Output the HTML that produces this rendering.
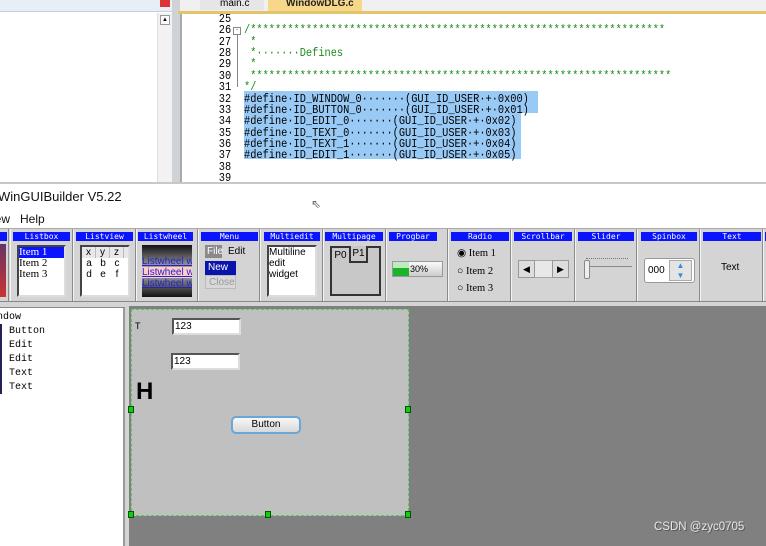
<!DOCTYPE html>
<html><head><meta charset="utf-8"><style>
*{margin:0;padding:0;box-sizing:border-box}
body{width:766px;height:546px;overflow:hidden;background:#fff;position:relative;font-family:"Liberation Sans",sans-serif}
.a{position:absolute}
.code{font-family:"Liberation Mono",monospace;font-size:12px;line-height:11.36px;white-space:pre;color:#000}
.sx{transform:scaleX(0.86);transform-origin:0 0}
.g{color:#1a8a1a}
.hd{position:absolute;top:3px;height:9px;background:#0a14ff;color:#fff;font-family:"DejaVu Sans Mono",monospace;font-size:8px;line-height:9px;text-align:center}
.cell{position:absolute;top:229px;height:72px;border-left:1px solid #f4f4f4;border-right:1px solid #8a8a8a;background:#d4d4d4}
.sm{font-size:10px;font-family:"Liberation Sans",sans-serif}
</style></head><body>
<div class="a" style="left:0;top:0;width:766px;height:12px;background:#f0f0f0"></div>
<div class="a" style="left:0;top:0;width:172px;height:12px;background:#e8eef6;border-bottom:1px solid #ccd"></div>
<div class="a" style="left:160px;top:0;width:10px;height:7px;background:#d33"></div>
<div class="a" style="left:0;top:13px;width:172px;height:170px;background:#fff"></div>
<div class="a" style="left:157px;top:13px;width:15px;height:170px;background:#f2f2f2;border-left:1px solid #ddd"></div>
<div class="a" style="left:160px;top:15px;width:10px;height:10px;border:1px solid #999;background:#fafafa;font-size:6px;text-align:center;line-height:8px">▲</div>
<div class="a" style="left:172px;top:0;width:8px;height:183px;background:#cfd3d8"></div>
<div class="a" style="left:200px;top:0;width:64px;height:10px;background:#e6e6e6;font-size:10px;line-height:8px;padding-left:20px">main.c</div>
<div class="a" style="left:268px;top:0;width:94px;height:11px;background:#f7d88a;font-size:10px;font-weight:bold;line-height:8px;padding-left:18px;color:#222">WindowDLG.c</div>
<div class="a" style="left:178px;top:11px;width:588px;height:3px;background:#e2c46a"></div>
<div class="a" style="left:180px;top:14px;width:586px;height:169px;background:#fff;border-left:2px solid #a9a9a9"></div>
<div class="a" style="left:244px;top:91px;width:294px;height:22px;background:#99c9f5"></div>
<div class="a" style="left:244px;top:113px;width:277px;height:46px;background:#99c9f5"></div>
<div class="a code sx" style="left:214px;top:14px;width:20px;text-align:right">25
26
27
28
29
30
31
32
33
34
35
36
37
38
39</div>
<div class="a" style="left:233px;top:27px;width:8px;height:8px;border:1px solid #888;font-size:7px;line-height:6px;text-align:center;color:#555">-</div>
<div class="a" style="left:237px;top:35px;width:1px;height:52px;background:#888"></div>
<div class="a code sx" style="left:244px;top:14px">
<span class="g">/*******************************************************************
 *
 *·······Defines
 *
 ********************************************************************
*/</span>
#define·ID_WINDOW_0·······(GUI_ID_USER·+·0x00)
#define·ID_BUTTON_0·······(GUI_ID_USER·+·0x01)
#define·ID_EDIT_0·······(GUI_ID_USER·+·0x02)
#define·ID_TEXT_0·······(GUI_ID_USER·+·0x03)
#define·ID_TEXT_1·······(GUI_ID_USER·+·0x04)
#define·ID_EDIT_1·······(GUI_ID_USER·+·0x05)</div>
<div class="a" style="left:0;top:182px;width:766px;height:2px;background:#c8c8c8"></div>
<div class="a" style="left:-2px;top:189px;font-size:13px;color:#111">WinGUIBuilder V5.22</div>
<div class="a" style="left:311px;top:197px;font-size:12px;color:#666">⇖</div>
<div class="a" style="left:-8px;top:212px;font-size:12px;color:#111">iew &nbsp;&nbsp;Help</div>
<div class="a" style="left:0;top:228px;width:766px;height:78px;background:#d4d4d4;border-top:1px solid #aaa"></div>
<div class="cell" style="left:-2px;width:11px"><div class="hd" style="left:0;width:8px"></div><div class="a" style="left:0;top:15px;width:7px;height:53px;background:linear-gradient(#636,#c33)"></div></div>
<div class="cell" style="left:10px;width:63px"><div class="hd" style="left:2px;width:57px">Listbox</div>
<div class="a sm" style="left:6px;top:16px;width:49px;height:52px;background:#fff;border:2px solid #444;border-right-color:#ddd;border-bottom-color:#ddd;line-height:11px;font-family:'Liberation Serif',serif;font-size:11px"><div style="background:#0a14ff;color:#fff">Item 1</div>Item 2<br>Item 3</div></div>
<div class="cell" style="left:73px;width:63px"><div class="hd" style="left:2px;width:57px">Listview</div>
<div class="a sm" style="left:6px;top:16px;width:50px;height:52px;background:#fff;border:2px solid #444;border-right-color:#ddd;border-bottom-color:#ddd;font-size:10px;line-height:11px;text-align:center">
<div style="display:flex;background:#e8e8e8"><span style="width:14px;border-right:1px solid #bbb">x</span><span style="width:14px;border-right:1px solid #bbb">y</span><span style="width:14px;border-right:1px solid #bbb">z</span></div>
<div style="display:flex"><span style="width:14px">a</span><span style="width:14px">b</span><span style="width:14px">c</span></div>
<div style="display:flex"><span style="width:14px">d</span><span style="width:14px">e</span><span style="width:14px">f</span></div></div></div>
<div class="cell" style="left:136px;width:62px"><div class="hd" style="left:1px;width:55px">Listwheel</div>
<div class="a" style="left:5px;top:16px;width:50px;height:52px;background:linear-gradient(#111,#bbb 50%,#111);overflow:hidden;font-size:10px;color:#22c;line-height:11px;white-space:nowrap;padding-top:11px;text-decoration:underline">Listwheel wi<br><span style="background:#fcc">Listwheel wi</span><br>Listwheel wi</div></div>
<div class="cell" style="left:198px;width:62px"><div class="hd" style="left:2px;width:57px">Menu</div>
<div class="a sm" style="left:6px;top:16px;width:17px;height:13px;background:#8a8a8a;color:#fff;padding-left:2px;line-height:13px">File</div><div class="a sm" style="left:29px;top:16px;line-height:13px">Edit</div>
<div class="a sm" style="left:6px;top:32px;width:31px;height:14px;background:#0a14aa;color:#fff;padding-left:3px;line-height:14px">New</div>
<div class="a sm" style="left:6px;top:46px;width:31px;height:14px;background:#d8d8d8;color:#999;padding-left:3px;line-height:14px;border:1px solid #bbb">Close</div></div>
<div class="cell" style="left:260px;width:63px"><div class="hd" style="left:3px;width:56px">Multiedit</div>
<div class="a sm" style="left:6px;top:16px;width:50px;height:52px;background:#fff;border:2px solid #444;border-right-color:#ddd;border-bottom-color:#ddd;line-height:11px">Multiline<br>edit<br>widget</div></div>
<div class="cell" style="left:323px;width:63px"><div class="hd" style="left:1px;width:58px">Multipage</div>
<div class="a" style="left:6px;top:17px;width:51px;height:50px;border:2px solid #333;background:#c8c8c8"></div>
<div class="a sm" style="left:8px;top:20px;width:17px;height:13px;text-align:center;line-height:13px">P0</div>
<div class="a sm" style="left:25px;top:17px;width:19px;height:17px;border:2px solid #333;border-top:0;text-align:center;line-height:15px;background:#c8c8c8">P1</div></div>
<div class="cell" style="left:386px;width:62px"><div class="hd" style="left:2px;width:48px">Progbar</div>
<div class="a sm" style="left:5px;top:32px;width:51px;height:16px;border:1px solid #999;background:linear-gradient(#fafafa,#ccc);line-height:14px;padding-left:17px;font-size:9px">30%</div>
<div class="a" style="left:6px;top:39px;width:16px;height:8px;background:#1bb32a"></div><div class="a" style="left:6px;top:33px;width:16px;height:6px;background:#bfe9bf"></div></div>
<div class="cell" style="left:448px;width:63px"><div class="hd" style="left:2px;width:58px">Radio</div>
<div class="a" style="left:8px;top:16px;font-family:'Liberation Serif',serif;font-size:10.5px;line-height:17.5px">◉ Item 1<br>○ Item 2<br>○ Item 3</div></div>
<div class="cell" style="left:511px;width:64px"><div class="hd" style="left:2px;width:58px">Scrollbar</div>
<div class="a" style="left:6px;top:31px;width:51px;height:18px;background:#e8e8e8;border:1px solid #aaa"></div>
<div class="a" style="left:6px;top:31px;width:17px;height:18px;border:1px solid #999;background:#ddd;font-size:9px;text-align:center;line-height:16px">◀</div>
<div class="a" style="left:40px;top:31px;width:17px;height:18px;border:1px solid #999;background:#ddd;font-size:9px;text-align:center;line-height:16px">▶</div></div>
<div class="cell" style="left:575px;width:62px"><div class="hd" style="left:2px;width:56px">Slider</div>
<div class="a" style="left:10px;top:29px;width:42px;height:0;border-top:1px dotted #777"></div>
<div class="a" style="left:10px;top:37px;width:46px;height:1px;background:#888"></div>
<div class="a" style="left:8px;top:31px;width:6px;height:19px;border:1px solid #888;border-radius:2px;background:#eee"></div></div>
<div class="cell" style="left:637px;width:63px"><div class="hd" style="left:3px;width:56px">Spinbox</div>
<div class="a sm" style="left:6px;top:29px;width:51px;height:25px;border:1px solid #999;border-radius:3px;background:#fff;line-height:23px;padding-left:3px">000</div>
<div class="a" style="left:31px;top:31px;width:23px;height:21px;background:#e4e4e4;border:1px solid #aaa;color:#3a8ad8;font-size:8px;text-align:center;line-height:10px">▲<br>▼</div></div>
<div class="cell" style="left:700px;width:63px"><div class="hd" style="left:2px;width:58px">Text</div>
<div class="a sm" style="left:20px;top:33px;font-size:10px">Text</div></div>
<div class="cell" style="left:763px;width:10px"><div class="hd" style="left:1px;width:10px"></div></div>
<div class="a" style="left:0;top:301px;width:766px;height:6px;background:#d4d4d4;border-top:1px solid #888"></div>
<div class="a" style="left:0;top:307px;width:125px;height:239px;background:#fff;border-right:2px solid #999;border-top:1px solid #888"></div>
<div class="a" style="left:-3px;top:311px;font-family:'Liberation Mono',monospace;font-size:10px;line-height:14px;white-space:pre">ndow
  Button
  Edit
  Edit
  Text
  Text</div>
<div class="a" style="left:0;top:324px;width:2px;height:70px;border-left:2px solid #225"></div>
<div class="a" style="left:125px;top:305px;width:4px;height:241px;background:#d4d4d4"></div>
<div class="a" style="left:129px;top:306px;width:637px;height:240px;background:#808080"></div>
<div class="a" style="left:131px;top:309px;width:278px;height:207px;background:#c0c0c0;border:1px dashed #5c5"></div>
<div class="a sm" style="left:135px;top:321px;font-size:9px">T</div>
<div class="a sm" style="left:172px;top:318px;width:69px;height:17px;background:#fff;border:2px solid #555;border-right-color:#ddd;border-bottom-color:#ddd;line-height:13px;padding-left:1px">123</div>
<div class="a sm" style="left:171px;top:353px;width:69px;height:17px;background:#fff;border:2px solid #555;border-right-color:#ddd;border-bottom-color:#ddd;line-height:13px;padding-left:1px">123</div>
<div class="a" style="left:136px;top:378px;font-size:24px;font-weight:bold">H</div>
<div class="a sm" style="left:231px;top:416px;width:70px;height:18px;border:2px solid #6aa6d6;border-radius:5px;background:linear-gradient(#f8f8f8,#d8d8d8);text-align:center;line-height:14px">Button</div>
<div class="a" style="left:128px;top:406px;width:6px;height:7px;background:#1c1;border:1px solid #050"></div>
<div class="a" style="left:405px;top:406px;width:6px;height:7px;background:#1c1;border:1px solid #050"></div>
<div class="a" style="left:128px;top:511px;width:6px;height:7px;background:#1c1;border:1px solid #050"></div>
<div class="a" style="left:265px;top:511px;width:6px;height:7px;background:#1c1;border:1px solid #050"></div>
<div class="a" style="left:405px;top:511px;width:6px;height:7px;background:#1c1;border:1px solid #050"></div>
<div class="a" style="left:654px;top:521px;font-size:11.5px;color:#e8e8e8;text-shadow:1px 1px 0 #555">CSDN @zyc0705</div>
</body></html>
